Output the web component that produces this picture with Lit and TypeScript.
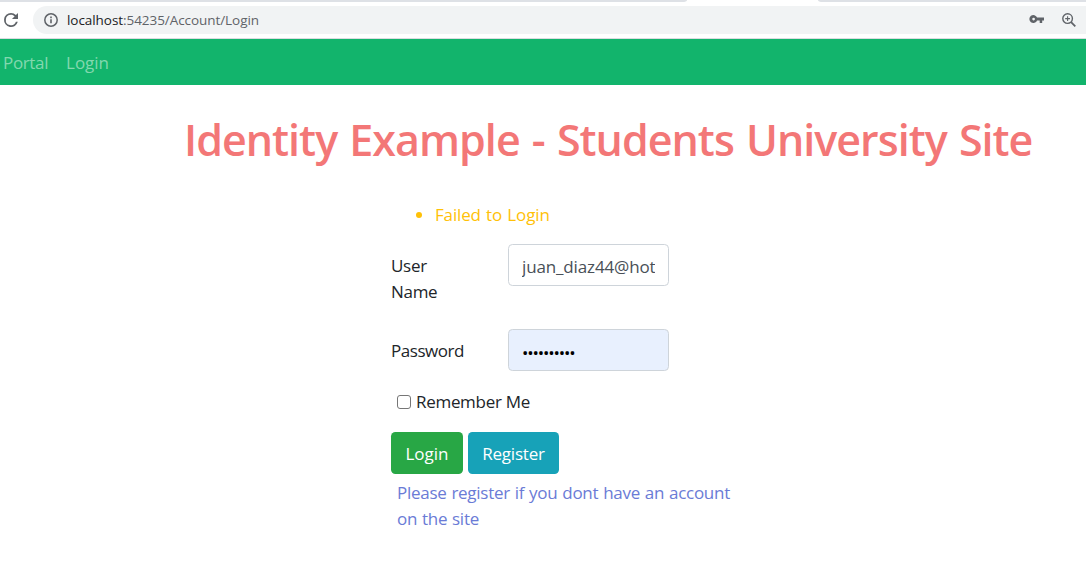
import { LitElement, html, css } from "lit";
import { customElement } from "lit/decorators.js";

@customElement("browser-bar")
class BrowserBar extends LitElement {
  static styles = css`
    :host { display: block; background: #fff; border-bottom: 1px solid #dadce0; height: 38px; }
    .tabs { display: flex; justify-content: space-between; height: 2px; background: #fff; }
    .left { width: 687px; background: #dee1e6; border-bottom-right-radius: 5px 2px; }
    .right { width: 268px; background: #dee1e6; border-bottom-left-radius: 5px 2px; }
    .row { display: flex; align-items: center; padding-top: 4px; height: 28px; }
    .reload { width: 16px; height: 16px; margin: 0 14px 0 3px; fill: #5f6368; }
    .omnibox { flex: 1; display: flex; align-items: center; height: 28px; background: #f1f3f4; border-radius: 14px 0 0 14px; padding-left: 10px; box-sizing: border-box; }
    .info { width: 16px; height: 16px; margin-right: 8px; }
    .url { flex: 1; font: 13.5px/20px "Open Sans", "Noto Sans", sans-serif; color: #5f6368; letter-spacing: -0.06px; white-space: nowrap; }
    .host { color: #202124; }
    .key { width: 16px; height: 16px; margin: 0 16px 2px 0; fill: #5f6368; }
    .zoom { width: 16px; height: 16px; margin-right: 9px; }
  `;
  render() {
    return html`
      <div class="tabs"><div class="left"></div><div class="right"></div></div>
      <div class="row">
        <svg class="reload" viewBox="0 0 16 16"><path d="M12.9 3.1A6.95 6.95 0 0 0 8 1a7 7 0 1 0 6.8 8.8h-1.9A5.2 5.2 0 1 1 8 2.8c1.45 0 2.7.6 3.65 1.55L9 7h6V1z"/></svg>
        <div class="omnibox">
          <svg class="info" viewBox="0 0 16 16"><circle cx="8" cy="8" r="6.2" fill="none" stroke="#5f6368" stroke-width="1.5"/><path d="M7.2 7.2h1.6v4H7.2zM7.2 4.6h1.6v1.6H7.2z" fill="#5f6368"/></svg>
          <div class="url"><span class="host">localhost</span>:54235/Account/Login</div>
          <svg class="key" viewBox="0 0 16 16"><path fill-rule="evenodd" d="M8.1 6.6A4 4 0 1 0 8.1 9.4H10.7V12H13.2V9.4H15V6.6zM4.6 6.7a1.35 1.35 0 1 1 0 2.7 1.35 1.35 0 0 1 0-2.7z"/></svg>
          <svg class="zoom" viewBox="0 0 16 16"><g fill="none" stroke="#5f6368"><circle cx="6.6" cy="6.6" r="4.8" stroke-width="1.4"/><path d="M10.1 10.1l4.2 4.2" stroke-width="1.8"/><path d="M6.6 4.2v4.8M4.2 6.6h4.8" stroke-width="1.1"/></g></svg>
        </div>
      </div>
    `;
  }
}

@customElement("app-root")
class AppRoot extends LitElement {
  static styles = css`
    :host { display: block; height: 583px; overflow: hidden; background: #fff; color: #212529; font: 17px/26px "Open Sans", "Noto Sans", sans-serif; }
    nav { display: flex; gap: 18px; height: 46px; box-sizing: border-box; padding: 11px 3px 9px; background: #12b46c; color: #83d8af; }
    .portal { letter-spacing: -0.35px; }
    .nav-login { letter-spacing: -0.05px; }
    h1 { margin: 28px 0 0 184px; font-size: 43px; line-height: 53px; font-weight: 600; letter-spacing: -0.98px; word-spacing: 2px; color: #f37777; white-space: nowrap; }
    .form { margin-left: 391px; width: 360px; }
    ul { margin: 36px 0 0; padding-left: 44px; color: #ffc107; letter-spacing: -0.15px; word-spacing: 1px; }
    .field { display: flex; align-items: flex-start; }
    .label { width: 117px; letter-spacing: -0.3px; }
    .short { width: 60px; margin-right: 57px; }
    .label-top { padding-top: 9px; }
    .user { margin-top: 16px; height: 85px; }
    .pass { height: 42px; }
    .pass .label { letter-spacing: -0.45px; }
    input[type="text"], input[type="password"] { box-sizing: border-box; width: 161px; height: 42px; margin: 0; border: 1px solid #ced4da; border-radius: 4.4px; padding: 4px 13px 1px; font: inherit; color: #495057; background: #fff; letter-spacing: -0.14px; outline: 0; }
    input[type="password"] { padding-top: 5px; background: #e8f0fe; color: #000; font-size: 17px; letter-spacing: -1.15px; }
    .check { display: flex; align-items: center; height: 26px; margin: 18px 0 0 6px; letter-spacing: -0.3px; }
    .check input { appearance: none; box-sizing: border-box; width: 14px; height: 14px; border: 1px solid #767676; border-radius: 3px; margin: 0 5px 1px 0; background: #fff; }
    .buttons { display: flex; gap: 5px; margin-top: 17px; }
    button { height: 42px; border: 0; border-radius: 4.4px; padding: 2px 0 0; color: #fff; font: inherit; letter-spacing: -0.2px; }
    .login { width: 72px; background: #28a745; letter-spacing: 0; }
    .register { width: 91px; background: #17a2b8; }
    .hint { margin: 6px 0 0 6px; color: #6a7bd6; letter-spacing: -0.27px; word-spacing: 0.7px; white-space: nowrap; }
  `;
  render() {
    return html`
      <browser-bar></browser-bar>
      <nav><span class="portal">Portal</span><span class="nav-login">Login</span></nav>
      <h1>Identity Example - Students University Site</h1>
      <div class="form">
        <ul><li>Failed to Login</li></ul>
        <div class="field user"><label class="label short label-top">User Name</label><input type="text" value="juan_diaz44@hotmail.com"></div>
        <div class="field pass"><label class="label label-top">Password</label><input type="password" value="abcdefghij"></div>
        <label class="check"><input type="checkbox"><span>Remember Me</span></label>
        <div class="buttons"><button class="login">Login</button><button class="register">Register</button></div>
        <div class="hint">Please register if you dont have an account<br>on the site</div>
      </div>
    `;
  }
}
